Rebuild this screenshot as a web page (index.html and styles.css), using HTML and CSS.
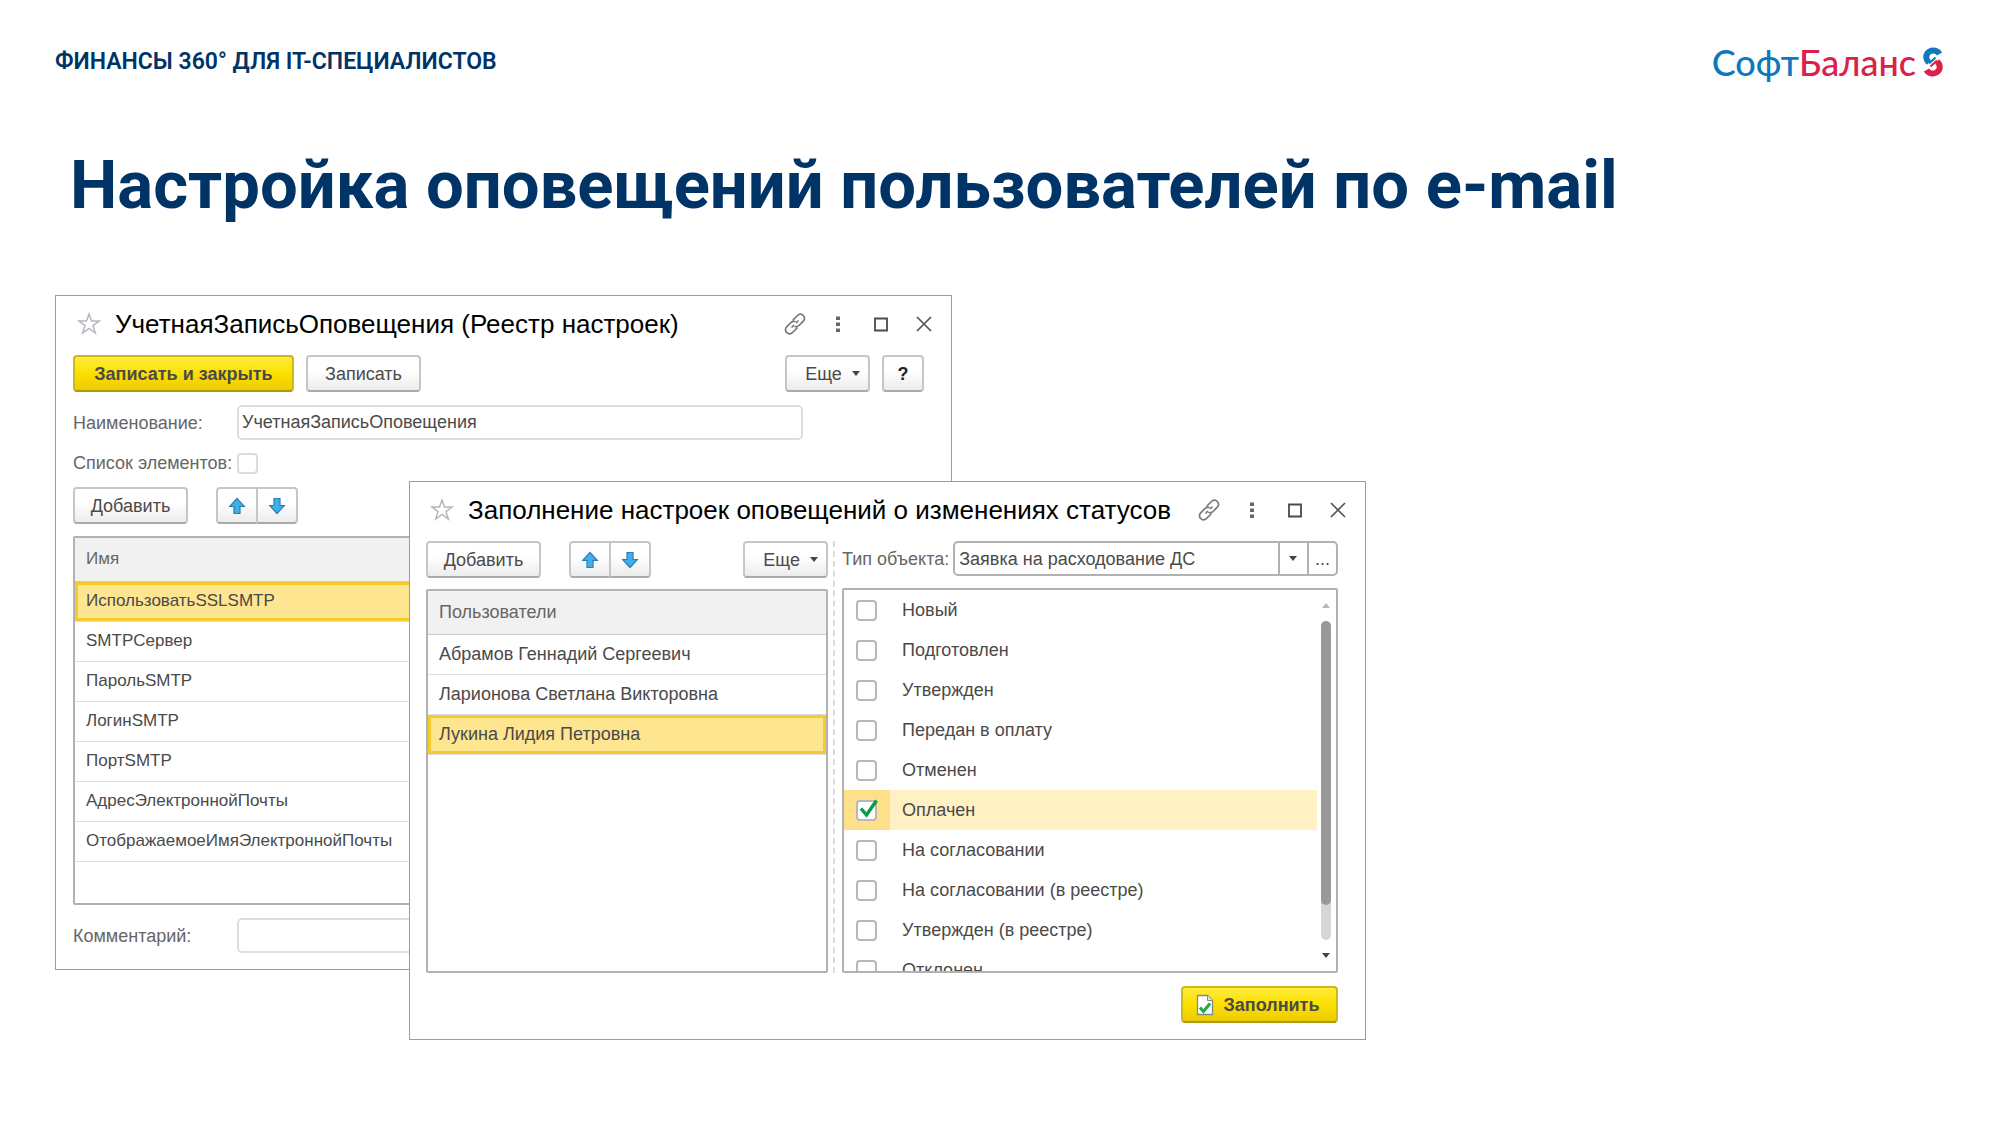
FILE: index.html
```html
<!DOCTYPE html>
<html lang="ru">
<head>
<meta charset="utf-8">
<meta name="viewport" content="width=device-width, initial-scale=1">
<title>Настройка оповещений пользователей по e-mail</title>
<link rel="stylesheet" href="styles.css">
</head>
<body>
<svg class="sprite" aria-hidden="true">
  <symbol id="star" viewBox="0 0 24 24"><path d="M12 2l2.500 7h7.500l-6 4.600 2.300 7.400-6.300-4.500-6.300 4.500 2.300-7.400-6-4.600h7.500z" fill="none" stroke="#b4b8be" stroke-width="1.500"/></symbol>
  <symbol id="link" viewBox="0 0 24 24"><g fill="none" stroke="#777" stroke-width="1.700" stroke-linecap="round"><path d="M10 8l4.500-4.500a3.900 3.900 0 0 1 5.800 0 3.900 3.900 0 0 1 0 5.700L16 13.500a3.900 3.900 0 0 1-4 1"/><path d="M14 16l-4.500 4.500a3.900 3.900 0 0 1-5.800 0 3.900 3.900 0 0 1 0-5.700L8 10.500a3.900 3.900 0 0 1 4-1"/><path d="M9 15l1.500-1.500M13.500 10.500L15 9"/></g></symbol>
  <symbol id="dots" viewBox="0 0 24 24"><path d="M10 4.500h4v3.500h-4zM10 10.500h4v3.500h-4zM10 16.500h4v3.500h-4z" fill="#666"/></symbol>
  <symbol id="box" viewBox="0 0 24 24"><path d="M6 6.500h12v12H6z" fill="none" stroke="#4a4a4a" stroke-width="1.800"/></symbol>
  <symbol id="cross" viewBox="0 0 24 24"><path d="M5 5l14 14M19 5L5 19" fill="none" stroke="#555" stroke-width="1.700"/></symbol>
  <symbol id="up" viewBox="0 0 18 18"><path d="M9 1.500l7.300 8H12v7H6v-7H1.700z" fill="#3fb0ee" stroke="#2b7fae" stroke-width="1.200"/></symbol>
  <symbol id="down" viewBox="0 0 18 18"><path d="M9 16.500l7.300-8H12v-7H6v7H1.700z" fill="#3fb0ee" stroke="#2b7fae" stroke-width="1.200"/></symbol>
  <symbol id="tick" viewBox="0 0 24 24"><path d="M5 11.500l5.500 6.500L20.500 3.500" fill="none" stroke="#0b9a4a" stroke-width="3.400"/></symbol>
</svg>

<header class="top">
  <p class="top-title">ФИНАНСЫ 360° ДЛЯ IT-СПЕЦИАЛИСТОВ</p>
  <div class="logo">
    <span class="logo-soft">Софт</span><span class="logo-balance">Баланс</span>
    <svg class="logo-mark" viewBox="0 0 22 30" aria-hidden="true">
      <path d="M17.500 7C15.500 3.500 11 2.500 7.500 4.500 3.500 7 3 12 7 15.500" fill="none" stroke="#0d78bd" stroke-width="6"/>
      <path d="M7 16.500l6.500-6" fill="none" stroke="#0d78bd" stroke-width="2"/>
      <path d="M4.500 23c2 3.500 6.500 4.500 10 2.500 4-2.500 4.500-7.500.500-11" fill="none" stroke="#dc2048" stroke-width="6"/>
      <path d="M15 13.500l-6.500 6" fill="none" stroke="#dc2048" stroke-width="2"/>
    </svg>
  </div>
</header>

<main>
  <h1>Настройка оповещений пользователей по e-mail</h1>

  <div class="desktop">
    <section class="window window-registry" aria-labelledby="t1">
      <div class="titlebar">
        <svg class="icon star"><use href="#star"/></svg>
        <h2 id="t1">УчетнаяЗаписьОповещения (Реестр настроек)</h2>
        <div class="tools">
          <button type="button" aria-label="Ссылка"><svg class="icon"><use href="#link"/></svg></button>
          <button type="button" aria-label="Меню"><svg class="icon"><use href="#dots"/></svg></button>
          <button type="button" aria-label="Развернуть"><svg class="icon"><use href="#box"/></svg></button>
          <button type="button" aria-label="Закрыть"><svg class="icon"><use href="#cross"/></svg></button>
        </div>
      </div>
      <div class="bar">
        <button type="button" class="btn btn-main btn-save">Записать и закрыть</button>
        <button type="button" class="btn">Записать</button>
        <button type="button" class="btn btn-more push">Еще<span class="caret"></span></button>
        <button type="button" class="btn btn-help">?</button>
      </div>
      <div class="field">
        <label for="name">Наименование:</label>
        <input id="name" type="text" class="text name-input" value="УчетнаяЗаписьОповещения">
      </div>
      <div class="field field-check">
        <label for="list">Список элементов:</label>
        <input id="list" type="checkbox" class="check check-light">
      </div>
      <div class="bar">
        <button type="button" class="btn">Добавить</button>
        <div class="pair">
          <button type="button" class="btn" aria-label="Вверх"><svg class="arrow"><use href="#up"/></svg></button>
          <button type="button" class="btn" aria-label="Вниз"><svg class="arrow"><use href="#down"/></svg></button>
        </div>
      </div>
      <div class="frame frame-registry">
        <table>
          <thead><tr><th>Имя</th></tr></thead>
          <tbody>
            <tr class="selected"><td>ИспользоватьSSLSMTP</td></tr>
            <tr><td>SMTPСервер</td></tr>
            <tr><td>ПарольSMTP</td></tr>
            <tr><td>ЛогинSMTP</td></tr>
            <tr><td>ПортSMTP</td></tr>
            <tr><td>АдресЭлектроннойПочты</td></tr>
            <tr><td>ОтображаемоеИмяЭлектроннойПочты</td></tr>
          </tbody>
        </table>
      </div>
      <div class="field">
        <label for="comment">Комментарий:</label>
        <input id="comment" type="text" class="text">
      </div>
    </section>

    <section class="window window-fill" aria-labelledby="t2">
      <div class="titlebar">
        <svg class="icon star"><use href="#star"/></svg>
        <h2 id="t2">Заполнение настроек оповещений о изменениях статусов</h2>
        <div class="tools">
          <button type="button" aria-label="Ссылка"><svg class="icon"><use href="#link"/></svg></button>
          <button type="button" aria-label="Меню"><svg class="icon"><use href="#dots"/></svg></button>
          <button type="button" aria-label="Развернуть"><svg class="icon"><use href="#box"/></svg></button>
          <button type="button" aria-label="Закрыть"><svg class="icon"><use href="#cross"/></svg></button>
        </div>
      </div>
      <div class="split">
        <div class="pane">
          <div class="bar">
            <button type="button" class="btn">Добавить</button>
            <div class="pair">
              <button type="button" class="btn" aria-label="Вверх"><svg class="arrow"><use href="#up"/></svg></button>
              <button type="button" class="btn" aria-label="Вниз"><svg class="arrow"><use href="#down"/></svg></button>
            </div>
            <button type="button" class="btn btn-more push">Еще<span class="caret"></span></button>
          </div>
          <div class="frame frame-users">
            <table>
              <thead><tr><th>Пользователи</th></tr></thead>
              <tbody>
                <tr><td>Абрамов Геннадий Сергеевич</td></tr>
                <tr><td>Ларионова Светлана Викторовна</td></tr>
                <tr class="selected"><td>Лукина Лидия Петровна</td></tr>
              </tbody>
            </table>
          </div>
        </div>
        <div class="divider"></div>
        <div class="pane">
          <div class="type">
            <label for="type">Тип объекта:</label>
            <div class="combo">
              <select id="type"><option>Заявка на расходование ДС</option></select>
              <span class="combo-arrow"><span class="caret"></span></span>
              <button type="button" aria-label="Выбрать">...</button>
            </div>
          </div>
          <div class="frame statuses">
            <ul>
              <li><label><span class="mark"><input type="checkbox" class="check"></span>Новый</label></li>
              <li><label><span class="mark"><input type="checkbox" class="check"></span>Подготовлен</label></li>
              <li><label><span class="mark"><input type="checkbox" class="check"></span>Утвержден</label></li>
              <li><label><span class="mark"><input type="checkbox" class="check"></span>Передан в оплату</label></li>
              <li><label><span class="mark"><input type="checkbox" class="check"></span>Отменен</label></li>
              <li class="current"><label><span class="mark"><input type="checkbox" class="check" checked><svg class="tick"><use href="#tick"/></svg></span>Оплачен</label></li>
              <li><label><span class="mark"><input type="checkbox" class="check"></span>На согласовании</label></li>
              <li><label><span class="mark"><input type="checkbox" class="check"></span>На согласовании (в реестре)</label></li>
              <li><label><span class="mark"><input type="checkbox" class="check"></span>Утвержден (в реестре)</label></li>
              <li><label><span class="mark"><input type="checkbox" class="check"></span>Отклонен</label></li>
            </ul>
            <div class="scroll" aria-hidden="true">
              <span class="caret caret-up"></span>
              <div class="track"><div class="thumb"></div></div>
              <span class="caret"></span>
            </div>
          </div>
        </div>
      </div>
      <div class="bar bar-end">
        <button type="button" class="btn btn-main btn-fill">
          <svg class="doc" viewBox="0 0 18 22" aria-hidden="true"><path d="M1.500 1.500h10l5 5v14h-15z" fill="#fff" stroke="#7d8a86" stroke-width="1.300"/><path d="M11.500 1.500v5h5" fill="#dfe8e4" stroke="#7d8a86"/><path d="M4 13.500l3.500 4 6.500-8" fill="none" stroke="#1fa84c" stroke-width="3"/></svg>
          Заполнить
        </button>
      </div>
    </section>
  </div>
</main>
</body>
</html>
```
FILE: styles.css
```css
* { box-sizing: border-box; }

body {
  margin: 0;
  background: #fff;
  color: #4a4a4a;
  font: 18px/24px "Liberation Sans", Arial, sans-serif;
}

button, input, select { font: inherit; color: inherit; }
h1, h2, p, ul { margin: 0; padding: 0; }
.sprite { display: none; }

.top {
  display: flex;
  align-items: center;
  justify-content: space-between;
  height: 64px;
  margin: 30px 56px 0 55px;
  color: #003366;
}

.top-title { font: 600 23px/32px Roboto, sans-serif; }

.logo {
  display: flex;
  align-items: center;
  font: 500 36px/40px Lato, "Open Sans", sans-serif;
}
.logo-soft { color: #0d78bd; }
.logo-balance { color: #dc2048; }
.logo-mark { width: 22px; height: 30px; margin-left: 6px; }

h1 {
  margin: 51px 70px 0;
  color: #003366;
  font: 700 67px/80px Roboto, sans-serif;
}

.desktop {
  display: grid;
  grid-template-columns: 354fr 543fr 414fr 634fr;
  align-items: start;
  margin-top: 70px;
  padding-left: 55px;
}

.window {
  grid-row: 1;
  min-width: 0;
  padding: 0 27px 16px 17px;
  border: 1px solid #9c9c9c;
  background: #fff;
}
.window-registry { grid-column: 1 / 3; }
.window-fill { grid-column: 2 / 4; margin-top: 186px; padding-left: 16px; }

.titlebar {
  display: flex;
  align-items: center;
  height: 56px;
  margin-bottom: 3px;
}
.titlebar h2 {
  flex: 1;
  min-width: 0;
  color: #000;
  font-size: 26px;
  font-weight: 400;
  line-height: 32px;
  white-space: nowrap;
}
.icon { display: block; width: 24px; height: 24px; }
.star { margin: 0 14px 0 4px; }
.tools { display: flex; gap: 19px; margin-right: -12px; }
.tools button { padding: 0; border: 0; background: none; }

.bar { display: flex; gap: 12px; }
.push { margin-left: auto; }

.btn {
  display: flex;
  align-items: center;
  justify-content: center;
  min-width: 115px;
  height: 37px;
  padding: 0;
  border: 2px solid #c6c6c6;
  border-bottom-color: #aaa;
  border-radius: 4px;
  background: linear-gradient(#fff 40%, #ececec);
  white-space: nowrap;
}
.btn-main {
  border-color: #cdb91c;
  border-bottom-color: #a99a10;
  background: linear-gradient(#ffec3c, #fbe000 50%, #eecb00);
  font-weight: 700;
}
.btn-save { width: 221px; }
.btn-fill { width: 157px; gap: 10px; padding-right: 4px; }
.btn-more { min-width: 85px; gap: 10px; padding-left: 10px; }
.btn-help { min-width: 42px; color: #222; font-weight: 700; }

.pair { display: flex; margin-left: 16px; }
.pair .btn { min-width: 42px; }
.pair .btn:first-child { border-radius: 4px 0 0 4px; }
.pair .btn:last-child { margin-left: -2px; border-radius: 0 4px 4px 0; }
.arrow { width: 18px; height: 18px; }

.caret {
  border: 4px solid transparent;
  border-top: 5px solid #444;
  border-bottom: 0;
}
.caret-up { border-top: 0; border-bottom: 5px solid #b8b8b8; }

.field {
  display: grid;
  grid-template-columns: 164px 1fr;
  align-items: center;
  margin-top: 13px;
  color: #666;
}
.field-check { margin-bottom: 13px; line-height: 21px; }
.text {
  height: 35px;
  padding: 0 3px;
  border: 2px solid #dedede;
  border-radius: 5px;
  background: #fff;
  color: #4a4a4a;
}
.name-input { margin-right: 121px; }

.check {
  display: block;
  width: 21px;
  height: 21px;
  margin: 0;
  border: 2px solid #b8b8b8;
  border-radius: 4px;
  background: #fff;
  appearance: none;
}
.check-light { border-color: #dcdcdc; }

.frame {
  overflow: hidden;
  border: 2px solid #b2b2b2;
  border-radius: 2px;
}
.frame-registry { height: 369px; margin-top: 12px; font-size: 17px; }
.frame-users { height: 384px; margin-top: 11px; }

table { width: 100%; border-collapse: collapse; }
th, td { padding: 0 11px; font-weight: 400; text-align: left; }
th { height: 43px; border-bottom: 1px solid #c8c8c8; background: #f1f1f1; color: #666; }
td { height: 40px; border-bottom: 1px solid #dedede; }
.selected td {
  background: #fee58f;
  box-shadow: inset 0 0 0 3px #f6c92c;
}

.split {
  display: grid;
  grid-template-columns: 403fr 14px 497fr;
}
.pane { min-width: 0; }
.divider { margin-left: 5px; border-left: 2px dashed #dcdcdc; }

.type { display: flex; align-items: center; gap: 4px; color: #666; }
.type label { white-space: nowrap; }
.combo {
  display: flex;
  flex: 1;
  height: 35px;
  border: 2px solid #b2b2b2;
  border-radius: 5px;
  color: #4a4a4a;
}
.combo select {
  flex: 1;
  min-width: 0;
  padding: 0 4px;
  border: 0;
  background: none;
  appearance: none;
}
.combo-arrow, .combo button {
  display: flex;
  align-items: center;
  justify-content: center;
  width: 29px;
  padding: 0;
  border: 0;
  border-left: 2px solid #b2b2b2;
  background: none;
}

.statuses { display: flex; height: 385px; margin-top: 12px; }
.statuses ul { flex: 1; list-style: none; }
.statuses label { display: flex; align-items: center; gap: 12px; height: 40px; }
.mark {
  position: relative;
  display: flex;
  align-items: center;
  height: 40px;
  width: 46px;
  padding-left: 12px;
}
.current { background: #fff1c4; }
.current .mark { background: #fee08a; }
.tick { position: absolute; left: 12px; top: 7px; width: 24px; height: 24px; }

.scroll {
  display: flex;
  flex-direction: column;
  align-items: center;
  width: 19px;
  padding: 13px 0;
}
.track {
  flex: 1;
  width: 10px;
  margin: 13px 0;
  border-radius: 5px;
  background: #d6d6d6;
}
.thumb { height: 89%; border-radius: 5px; background: #999; }

.bar-end { justify-content: flex-end; margin-top: 13px; }
.doc { width: 18px; height: 22px; }
```
